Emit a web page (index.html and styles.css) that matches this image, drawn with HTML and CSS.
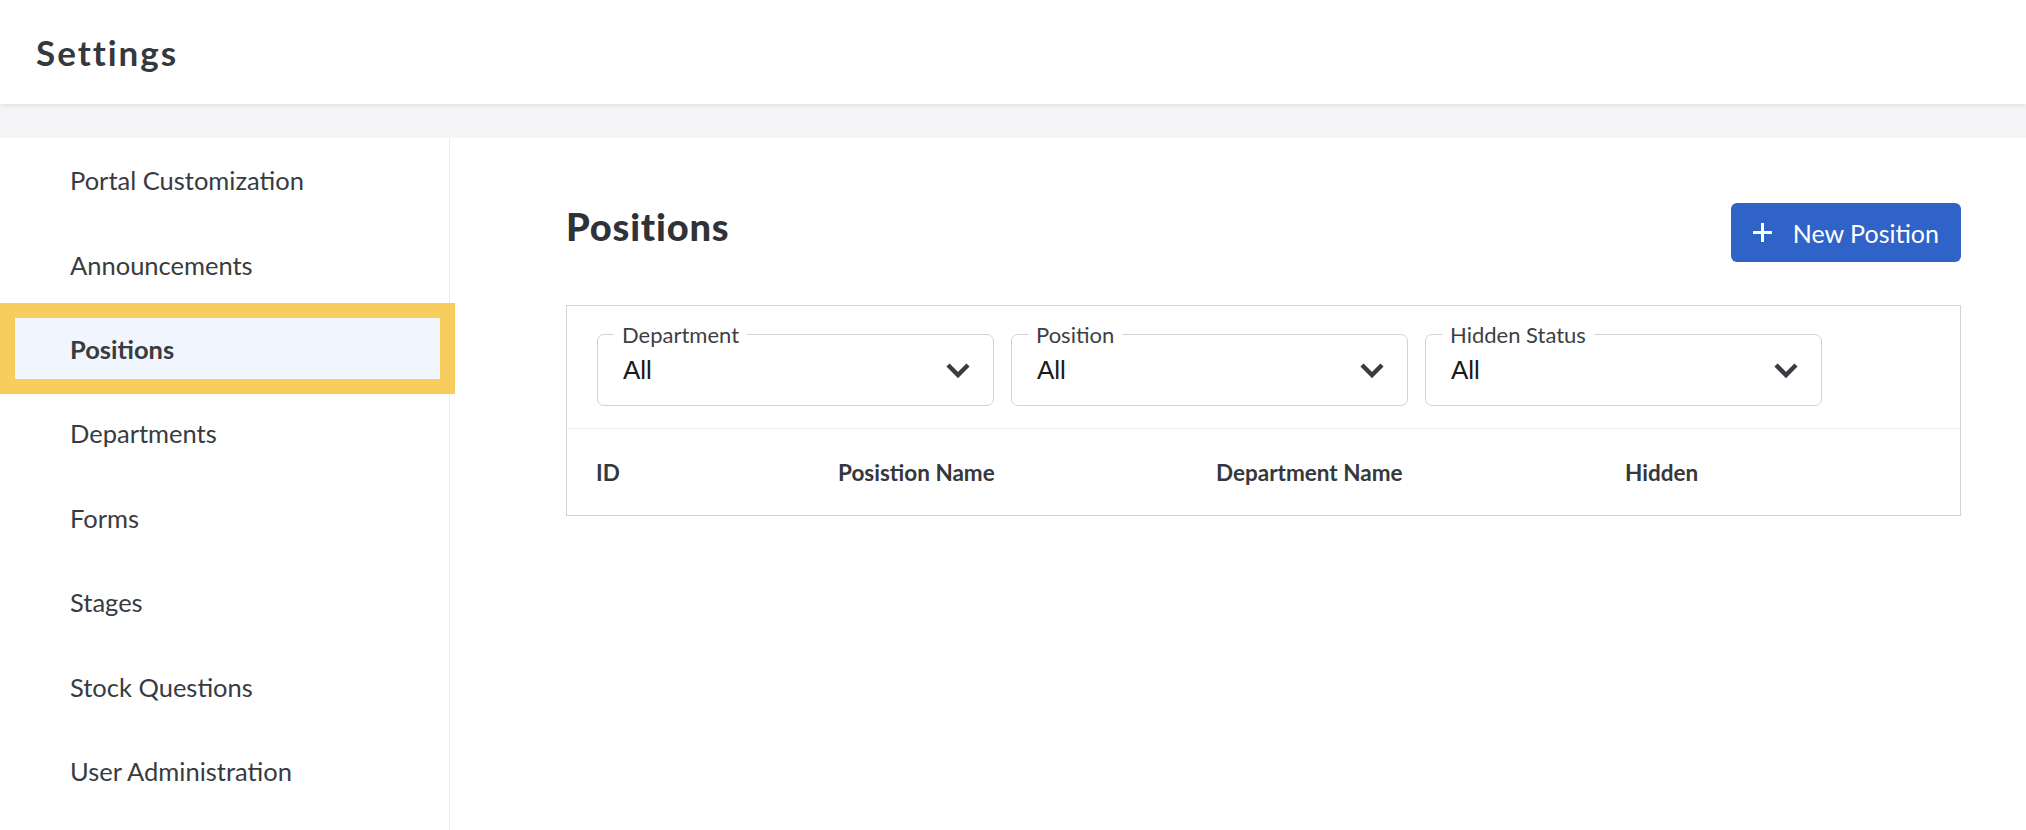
FILE: index.html
```html
<!DOCTYPE html>
<html lang="en">
<head>
  <meta charset="UTF-8" />
  <meta name="viewport" content="width=device-width, initial-scale=1.0"/>
  <title>Settings</title>
  <link rel="stylesheet" href="styles.css">
</head>
<body>
  <header class="topbar">
    <h1>Settings</h1>
  </header>
  <div class="strip"></div>

  <div class="layout">
    <nav class="sidebar">
      <ul>
        <li><a href="#">Portal Customization</a></li>
        <li><a href="#">Announcements</a></li>
        <li><a href="#" class="active">Positions</a></li>
        <li><a href="#">Departments</a></li>
        <li><a href="#">Forms</a></li>
        <li><a href="#">Stages</a></li>
        <li><a href="#">Stock Questions</a></li>
        <li><a href="#">User Administration</a></li>
      </ul>
    </nav>

    <main class="content">
      <div class="page-head">
        <h2>Positions</h2>
        <button class="btn">
          <svg class="plus" width="19" height="19" viewBox="0 0 19 19"><path d="M9.5 0v19M0 9.5h19" stroke="#fff" stroke-width="3" fill="none"/></svg>
          New Position
        </button>
      </div>

      <div class="card">
        <div class="filters">
          <fieldset class="filter">
            <legend>Department</legend>
            <span class="value">All</span>
            <svg class="chev" width="26" height="16" viewBox="0 0 26 16"><path d="M3 3l10 10L23 3" stroke="#393c41" stroke-width="4.5" fill="none"/></svg>
          </fieldset>
          <fieldset class="filter">
            <legend>Position</legend>
            <span class="value">All</span>
            <svg class="chev" width="26" height="16" viewBox="0 0 26 16"><path d="M3 3l10 10L23 3" stroke="#393c41" stroke-width="4.5" fill="none"/></svg>
          </fieldset>
          <fieldset class="filter">
            <legend>Hidden Status</legend>
            <span class="value">All</span>
            <svg class="chev" width="26" height="16" viewBox="0 0 26 16"><path d="M3 3l10 10L23 3" stroke="#393c41" stroke-width="4.5" fill="none"/></svg>
          </fieldset>
        </div>
        <div class="table-head">
          <span>ID</span>
          <span>Posistion Name</span>
          <span>Department Name</span>
          <span>Hidden</span>
        </div>
      </div>
    </main>
  </div>
</body>
</html>
```

FILE: styles.css
```css
* { box-sizing: border-box; margin: 0; padding: 0; }

body {
  font-family: Lato, 'Noto Sans', sans-serif;
  color: #383b40;
  background: #fff;
  height: 830px;
  overflow: hidden;
}

.topbar {
  height: 104px;
  display: flex;
  align-items: center;
  padding-left: 36px;
  background: #fff;
  position: relative;
  z-index: 2;
  box-shadow: 0 2px 5px rgba(0, 0, 0, 0.08);
}

.topbar h1 {
  font-size: 35px;
  font-weight: 700;
  letter-spacing: 2px;
  color: #35383d;
}

.strip {
  height: 34px;
  background: #f5f5f7;
}

.layout {
  display: flex;
  height: 692px;
}

.sidebar {
  width: 450px;
  flex-shrink: 0;
  border-right: 1px solid #ececee;
}

.sidebar ul { list-style: none; }

.sidebar li {
  height: 84.4px;
  display: flex;
  align-items: center;
}

.sidebar a {
  display: flex;
  align-items: center;
  width: 100%;
  height: 61px;
  margin: 0 9px 0 15px;
  padding-left: 55px;
  font-size: 25.5px;
  color: #383b40;
  text-decoration: none;
}

.sidebar a.active {
  background: #f0f5fe;
  font-weight: 700;
  position: relative;
  z-index: 1;
  box-shadow: 0 0 0 15px #f7cd5e;
}

.content {
  flex: 1;
  padding: 65px 65px 0 116px;
}

.page-head {
  display: flex;
  justify-content: space-between;
  align-items: flex-start;
  margin-bottom: 43px;
}

.page-head h2 {
  font-size: 38px;
  font-weight: 900;
  letter-spacing: 0.8px;
  color: #2f3237;
}

.btn {
  display: flex;
  align-items: center;
  gap: 21px;
  height: 59px;
  padding: 0 22px;
  border: none;
  border-radius: 6px;
  background: #3063c8;
  color: #fff;
  font-family: Lato, 'Noto Sans', sans-serif;
  font-size: 25px;
  white-space: nowrap;
}

.btn .plus { flex-shrink: 0; }

.card {
  border: 1px solid #d4d4d6;
}

.filters {
  display: flex;
  gap: 17px;
  padding: 15px 30px 22px;
  border-bottom: 1px solid #ebebed;
}

.filter {
  width: 397px;
  height: 85px;
  border: 1px solid #d2d2d4;
  border-radius: 7px;
  padding: 0 22px 13px 16px;
  display: flex;
  align-items: center;
  justify-content: space-between;
}

.filter legend {
  padding: 0 8px;
  font-size: 22px;
  color: #3c3f44;
}

.filter .value {
  padding-left: 9px;
  font-family: 'Liberation Sans', Arial, sans-serif;
  font-size: 26px;
  color: #1a1a1a;
}

.table-head {
  display: grid;
  grid-template-columns: 242px 378px 409px 1fr;
  align-items: center;
  height: 86px;
  padding-left: 29px;
  font-size: 22.5px;
  font-weight: 700;
  color: #35383d;
}
```
